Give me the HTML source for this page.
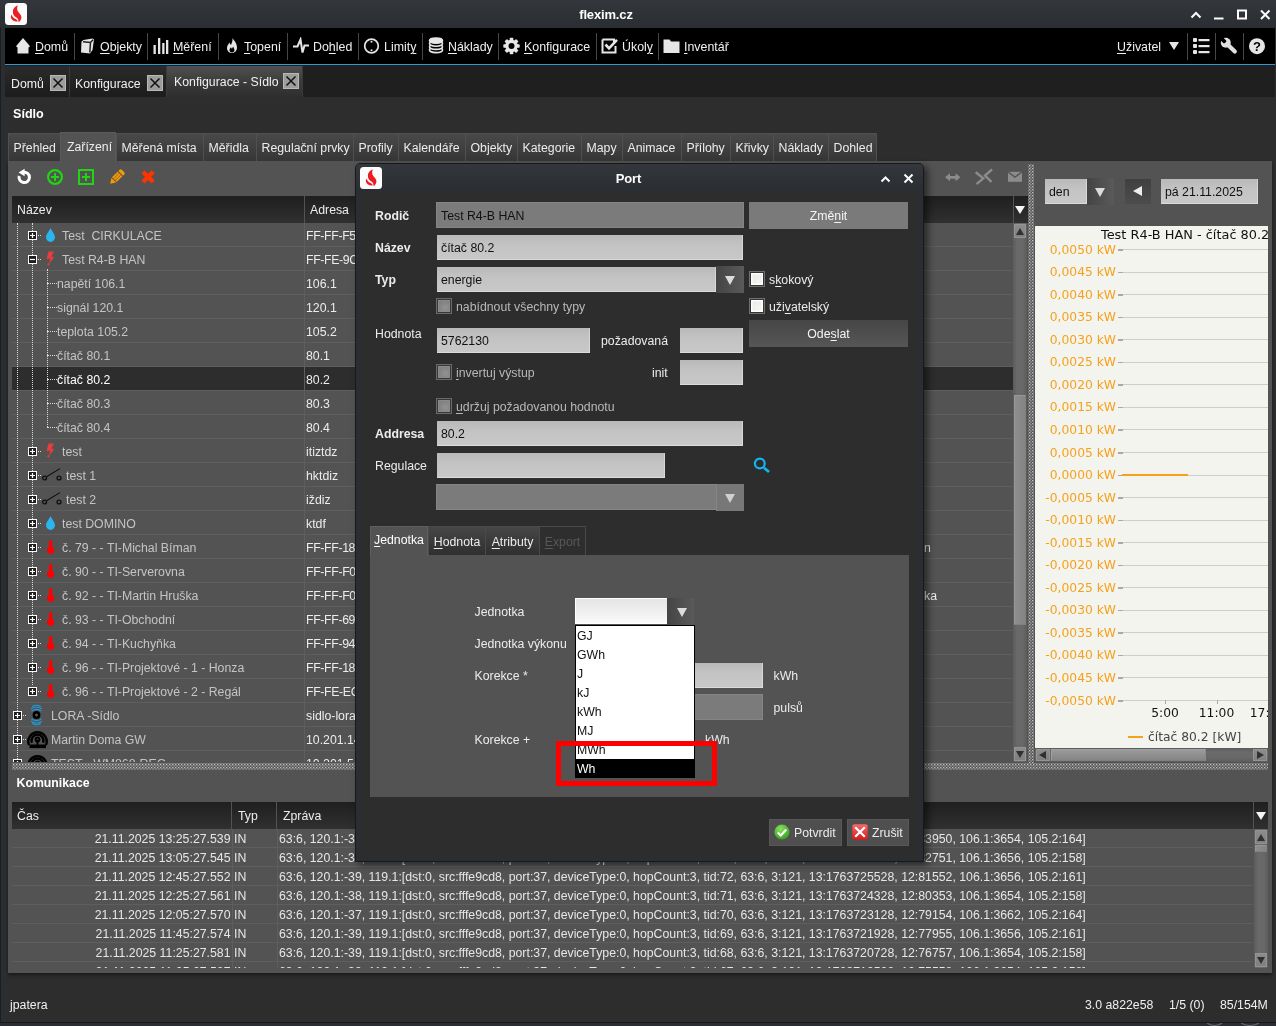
<!DOCTYPE html><html><head><meta charset="utf-8"><title>flexim.cz</title><style>
*{box-sizing:border-box;margin:0;padding:0}
html,body{width:1276px;height:1026px;overflow:hidden;background:#2d2d2d}
body{will-change:transform}
body{position:relative;font-family:"Liberation Sans","DejaVu Sans",sans-serif;font-size:12.3px;color:#e6e6e6;line-height:16px}
.a{position:absolute;white-space:nowrap}
.b{font-weight:bold}
u{text-decoration:underline;text-underline-offset:1.5px;text-decoration-thickness:1px}
.titlebar{left:0;top:0;width:1276px;height:28px;background:linear-gradient(#33373c,#2a2e32)}
.lborder{left:0;top:28px;width:5px;height:998px;background:#2a2e32;border-left:1px solid #1b1d20}
.menubar{left:5px;top:28px;width:1270px;height:36px;background:#000}
.blueline{left:5px;top:64px;width:1270px;height:1px;background:#3498d4;box-shadow:0 1px 0 #332e2c}
.msep{top:33px;width:1px;height:27px;background:#474747}
.mt{top:38px;height:18px;line-height:18px;font-size:12.4px;color:#f0f0f0}
.tabbar{left:5px;top:65px;width:1270px;height:32px;background:#1f1f1f}
.tab{top:66px;height:31px;background:linear-gradient(#2b2b2b,#1c1c1c);border-right:1px solid #3a3a3a}
.tabsel{background:linear-gradient(#505050,#3a3a3a 55%,#2e2e2e);border-right:1px solid #3a3a3a}
.tabx{width:16px;height:16px;background:#9a9a9a;border:1px solid #b0b0b0}
.panel{background:#535353}
.stab{top:133px;height:28px;line-height:29px;background:linear-gradient(#494949,#363636);border:1px solid #505050;border-bottom:none;color:#ececec;text-align:center}
.stabsel{background:#535353;border-color:#5a5a5a;top:132px;height:30px;line-height:28px}
.thead{background:linear-gradient(#1f1f1f,#303030);height:27px;line-height:28px;color:#ececec;border-right:1px solid #535353}
.row{left:12px;width:1001px;height:24px;border-bottom:1px solid #5e5e5e;line-height:23px;color:#d0d0d0}
.rowsel{background:#2d2d2d;color:#fff}
.cdiv{left:304px;width:1px;background:#5e5e5e}
.fld{background:linear-gradient(#b9b9b9,#c3c3c3 40%,#c8c8c8);background-clip:padding-box;border:1px solid transparent;box-shadow:inset -1px -1px 0 rgba(255,255,255,.35);color:#111;line-height:26px;padding-left:4px;height:27px}
.fldd{background:#7b7b7b;border:1px solid #858585;color:#111;line-height:26px;padding-left:4px;height:26px}
.btn{background:#7a7a7a;color:#f4f4f4;text-align:center;height:27px;line-height:28px}
.btn2{background:linear-gradient(#464646,#565656)}
.cbtn{background:linear-gradient(90deg,#444,#5a5a5a);height:27px;width:28px}
.tri{width:0;height:0;border-left:5.5px solid transparent;border-right:5.5px solid transparent;border-top:9px solid #dcdcdc}
.chk{width:16px;height:16px;background:radial-gradient(circle at 65% 65%,#f4f4f0,#e4e4e0);border:1px solid #707070;box-shadow:inset 0 0 0 1px #353535,inset 0 0 0 2.5px #fff}
.chkd{width:16px;height:16px;background:radial-gradient(circle at 60% 60%,#929292,#747474);border:1px solid #6a6a6a;box-shadow:inset 0 0 0 1px #383838,inset 0 0 0 2px #8a8a8a}
.lbl{line-height:16px;height:16px;color:#ececec}
.lbld{color:#b8b8b8}
.dj{font-family:"DejaVu Sans",sans-serif}
</style></head><body>
<div class="a titlebar"></div><div class="a lborder"></div>
<div class="a b" style="left:0;width:1212px;top:6.500px;text-align:center;font-size:13px;letter-spacing:-.15px;color:#fcfcfc">flexim.cz</div>
<svg class="a" style="left:5px;top:3px" width="22" height="22" viewBox="0 0 22 22"><rect width="22" height="22" rx="3.5" fill="#fcfcfc"/><path d="M12.800 2.600C10.500 3.200 8 5.500 7.900 8.500 7.800 11.500 9 13 11 14.200c1.600 1 2.600 2.100 2.400 4-.1.700.4 1 .9.600 1.900-1.600 2.700-4 1.700-6.200-1-2.200-3.400-3.400-3.800-5.800-.2-1.600 0-3 .6-4.200z" fill="#ec1c24"/><path d="M6.400 11.400c-1 2-.6 4.200 1 5.500 1.400 1.100 3.400 1.400 5.200 1.700.2-1-.4-1.800-1.600-2.400-2-1-3.800-2.400-4.600-4.800z" fill="#ec1c24"/></svg>
<svg class="a" style="left:1186px;top:6px" width="88" height="18" viewBox="0 0 88 18" fill="none" stroke="#fcfcfc" stroke-width="2"><path d="M5.500 11.500l4.500-4.500 4.500 4.500"/><path d="M28 12.500h9.500" /><rect x="52" y="4.500" width="8" height="8"/><path d="M75 4.500l8.500 8.500M83.500 4.500l-8.500 8.500"/></svg>
<div class="a menubar"></div><div class="a blueline"></div>
<svg class="a" style="left:16px;top:37px" width="18" height="18" viewBox="0 0 18 18"><path d="M7 1L0 9.200 1.500 10.500V16.500H12.500V10.500L14 9.200z" fill="#e6e6e6"/></svg>
<div class="a mt" style="left:35px"><u>D</u>omů</div>
<svg class="a" style="left:79px;top:37px" width="18" height="18" viewBox="0 0 18 18"><path d="M4.500 3L13.500 1.500 15 2.500 13.500 13 11 16.500 2 15.500 2.500 4.500z" fill="#e6e6e6"/><path d="M4 4.800L11.500 5.500 14 2.800M11.500 5.500L10.800 15.500" stroke="#222" stroke-width="1.500" fill="none"/></svg>
<div class="a mt" style="left:100px"><u>O</u>bjekty</div>
<svg class="a" style="left:153px;top:37px" width="18" height="18" viewBox="0 0 18 18"><path d="M0.500 8h2.300v9H.5zM5 1h2.300v16H5zM9.200 6h2.300v11H9.200zM13 3h2.300v14H13z" fill="#e6e6e6"/></svg>
<div class="a mt" style="left:173px"><u>M</u>ěření</div>
<svg class="a" style="left:224px;top:37px" width="18" height="18" viewBox="0 0 18 18"><path d="M8.500 1c1.500 2.500 4.500 5 4.500 9.500 0 3-2 5.500-5 5.500s-5-2.200-5-5c0-2.500 1.500-4 2.500-5.500.3 1.200.8 2 1.500 2.500C7.500 6 9 4 8.500 1z" fill="#e6e6e6"/><path d="M8 15.500c-1.500 0-2.500-1-2.500-2.500 0-1.200.8-2 1.500-2.800.2.800.6 1.200 1 1.500.2-1 .8-1.800 1.500-2.300-.2 1.300 1 2.300 1 3.600 0 1.500-1 2.500-2.500 2.500z" fill="#000"/></svg>
<div class="a mt" style="left:244px"><u>T</u>opení</div>
<svg class="a" style="left:293px;top:37px" width="18" height="18" viewBox="0 0 18 18"><path d="M0 9.500h4.500L7.500 2.500 9.500 15.500 11.500 8.500H16" stroke="#e6e6e6" stroke-width="2" fill="none" stroke-linejoin="miter"/></svg>
<div class="a mt" style="left:313px">Do<u>h</u>led</div>
<svg class="a" style="left:363px;top:37px" width="18" height="18" viewBox="0 0 18 18"><circle cx="8.500" cy="9" r="6.800" stroke="#e6e6e6" stroke-width="1.700" fill="none"/><circle cx="8.500" cy="4.800" r="1" fill="#e6e6e6"/><circle cx="8.500" cy="13.200" r="1" fill="#e6e6e6"/></svg>
<div class="a mt" style="left:384px">Limit<u>y</u></div>
<svg class="a" style="left:428px;top:37px" width="18" height="18" viewBox="0 0 18 18"><g fill="#000" stroke="#e6e6e6" stroke-width="1.600"><ellipse cx="8" cy="13" rx="6.500" ry="2.600"/><ellipse cx="8" cy="9.800" rx="6.500" ry="2.600"/><ellipse cx="8" cy="6.600" rx="6.500" ry="2.600"/><ellipse cx="8" cy="3.600" rx="6.500" ry="2.600" fill="#e6e6e6"/></g></svg>
<div class="a mt" style="left:448px"><u>N</u>áklady</div>
<svg class="a" style="left:503px;top:37px" width="18" height="18" viewBox="0 0 18 18"><g transform="translate(8.500 9)"><g fill="#e6e6e6"><rect x="-1.800" y="-8.200" width="3.600" height="16.400" rx=".8"/><rect x="-1.800" y="-8.200" width="3.600" height="16.400" rx=".8" transform="rotate(45)"/><rect x="-1.800" y="-8.200" width="3.600" height="16.400" rx=".8" transform="rotate(90)"/><rect x="-1.800" y="-8.200" width="3.600" height="16.400" rx=".8" transform="rotate(135)"/><circle r="6.200"/></g><circle r="3" fill="#000"/></g></svg>
<div class="a mt" style="left:524px"><u>K</u>onfigurace</div>
<svg class="a" style="left:601px;top:37px" width="18" height="18" viewBox="0 0 18 18"><path d="M1.500 2.500h11.500v4M14.500 9v6.500h-13V2.500" stroke="#e6e6e6" stroke-width="2" fill="none"/><path d="M4.500 7.500l3.500 3.800 8-8.500" stroke="#e6e6e6" stroke-width="2.600" fill="none"/></svg>
<div class="a mt" style="left:622px">Úkol<u>y</u></div>
<svg class="a" style="left:663px;top:37px" width="18" height="18" viewBox="0 0 18 18"><path d="M0.500 2.500h6l1.500 2h8.500v11.500h-16z" fill="#e6e6e6"/></svg>
<div class="a mt" style="left:684px"><u>I</u>nventář</div>
<div class="a msep" style="left:74px"></div>
<div class="a msep" style="left:147px"></div>
<div class="a msep" style="left:218px"></div>
<div class="a msep" style="left:287px"></div>
<div class="a msep" style="left:358px"></div>
<div class="a msep" style="left:422px"></div>
<div class="a msep" style="left:498px"></div>
<div class="a msep" style="left:596px"></div>
<div class="a msep" style="left:658px"></div>
<div class="a msep" style="left:1187px"></div>
<div class="a msep" style="left:1215px"></div>
<div class="a msep" style="left:1243px"></div>
<div class="a mt" style="left:1117px"><u>U</u>živatel</div>
<div class="a tri" style="left:1169px;top:42px;border-top-width:8px;border-top-color:#e6e6e6"></div>
<svg class="a" style="left:1193px;top:37px" width="18" height="18" viewBox="0 0 18 18" fill="#e6e6e6"><rect x="0" y="1" width="4" height="4" rx="1"/><rect x="0" y="7" width="4" height="4" rx="1"/><rect x="0" y="13" width="4" height="4" rx="1"/><rect x="5.500" y="2" width="11" height="2.200"/><rect x="5.500" y="8" width="11" height="2.200"/><rect x="5.500" y="14" width="11" height="2.200"/></svg>
<svg class="a" style="left:1220px;top:37px" width="18" height="18" viewBox="0 0 18 18"><path d="M7 7L14.800 14.600" stroke="#e0e0e0" stroke-width="4.200" stroke-linecap="round"/><circle cx="5.800" cy="5.800" r="5" fill="#e0e0e0"/><g transform="rotate(-45 5.800 5.800)"><rect x="3.900" y="-1" width="3.800" height="6.300" rx="1.200" fill="#000"/></g></svg>
<svg class="a" style="left:1248px;top:37px" width="18" height="18" viewBox="0 0 18 18"><circle cx="9" cy="9.200" r="8" fill="#e6e6e6"/><text x="9" y="13.500" text-anchor="middle" font-family="Liberation Sans" font-weight="bold" font-size="13" fill="#000">?</text></svg>
<div class="a tabbar"></div>
<div class="a tab" style="left:5px;width:65px"></div>
<div class="a" style="left:11px;top:76px;color:#f0f0f0">Domů</div>
<svg class="a" style="left:50px;top:75px" width="16" height="16" viewBox="0 0 16 16"><rect x=".5" y=".5" width="15" height="15" fill="#9c9c9c" stroke="#b8b8b8"/><path d="M3.500 3.500l9 9M12.500 3.500l-9 9" stroke="#111" stroke-width="1.500"/></svg>
<div class="a tab" style="left:70px;width:97px"></div>
<div class="a" style="left:75px;top:76px;color:#f0f0f0">Konfigurace</div>
<svg class="a" style="left:147px;top:75px" width="16" height="16" viewBox="0 0 16 16"><rect x=".5" y=".5" width="15" height="15" fill="#9c9c9c" stroke="#b8b8b8"/><path d="M3.500 3.500l9 9M12.500 3.500l-9 9" stroke="#111" stroke-width="1.500"/></svg>
<div class="a tab tabsel" style="left:167px;width:136px"></div>
<div class="a" style="left:174px;top:74px;color:#f0f0f0">Konfigurace - Sídlo</div>
<svg class="a" style="left:283px;top:73px" width="16" height="16" viewBox="0 0 16 16"><rect x=".5" y=".5" width="15" height="15" fill="#9c9c9c" stroke="#b8b8b8"/><path d="M3.500 3.500l9 9M12.500 3.500l-9 9" stroke="#111" stroke-width="1.500"/></svg>
<div class="a b" style="left:13px;top:106px;font-size:12.6px;color:#fff">Sídlo</div>
<div class="a panel" style="left:8px;top:161px;width:1264px;height:812px;box-shadow:0 2px 3px rgba(0,0,0,.45)"></div>
<div class="a stab" style="left:8px;width:53px;text-align:left;padding-left:4.5px">Přehled</div>
<div class="a stab stabsel" style="left:60px;width:56px;text-align:left;padding-left:6px">Zařízení</div>
<div class="a stab" style="left:116px;width:88px;text-align:left;padding-left:4.5px">Měřená místa</div>
<div class="a stab" style="left:203px;width:54px;text-align:left;padding-left:4.5px">Měřidla</div>
<div class="a stab" style="left:256px;width:98px;text-align:left;padding-left:4.5px">Regulační prvky</div>
<div class="a stab" style="left:353px;width:46px;text-align:left;padding-left:4.5px">Profily</div>
<div class="a stab" style="left:398px;width:68px;text-align:left;padding-left:4.5px">Kalendáře</div>
<div class="a stab" style="left:465px;width:53px;text-align:left;padding-left:4.5px">Objekty</div>
<div class="a stab" style="left:517px;width:65px;text-align:left;padding-left:4.5px">Kategorie</div>
<div class="a stab" style="left:581px;width:42px;text-align:left;padding-left:4.5px">Mapy</div>
<div class="a stab" style="left:622px;width:60px;text-align:left;padding-left:4.5px">Animace</div>
<div class="a stab" style="left:681px;width:50px;text-align:left;padding-left:4.5px">Přílohy</div>
<div class="a stab" style="left:730px;width:44px;text-align:left;padding-left:4.5px">Křivky</div>
<div class="a stab" style="left:773px;width:56px;text-align:left;padding-left:4.5px">Náklady</div>
<div class="a stab" style="left:828px;width:49px;text-align:left;padding-left:4.5px">Dohled</div>
<svg class="a" style="left:16px;top:168px" width="18" height="18" viewBox="0 0 18 18"><path d="M7.600 4.200A5.200 5.200 0 1 1 3.200 8" stroke="#fff" stroke-width="3" fill="none"/><path d="M8.600 0.800v7.500l-6-3.800z" fill="#fff"/></svg>
<svg class="a" style="left:46px;top:168px" width="18" height="18" viewBox="0 0 18 18" fill="none" stroke="#20d414" stroke-width="2.200"><circle cx="9" cy="9" r="6.900"/><path d="M9 5v8M5 9h8" stroke-width="2"/></svg>
<svg class="a" style="left:77px;top:168px" width="18" height="18" viewBox="0 0 18 18" fill="none" stroke="#20d414" stroke-width="2"><rect x="2" y="2" width="14" height="14"/><path d="M9 5v8M5 9h8" stroke-width="2"/></svg>
<svg class="a" style="left:108px;top:168px" width="18" height="18" viewBox="0 0 18 18"><g transform="rotate(45 9 9)" fill="#f59a00"><path d="M5.700 3.800V2a1.500 1.500 0 0 1 1.500-1.500h3.600a1.500 1.500 0 0 1 1.500 1.500v1.800z"/><rect x="5.700" y="4.800" width="1.900" height="8"/><rect x="8.050" y="4.800" width="1.900" height="8"/><rect x="10.400" y="4.800" width="1.900" height="8"/><path d="M5.700 13.600h6.600L9 18.600z"/></g></svg>
<svg class="a" style="left:140px;top:169px" width="16" height="16" viewBox="0 0 16 16"><path d="M3 2.800l10.200 10.200M13.200 2.800l-10.200 10.200" stroke="#ff3300" stroke-width="4.400"/></svg>
<svg class="a" style="left:944px;top:168px" width="80" height="18" viewBox="0 0 80 18"><g fill="#8c8c8c"><path d="M1 9.300l5-4v2.600h5.500V5.300l5 4-5 4v-2.600H6v2.600z"/><path d="M64 3.800h14v10H64z"/></g><path d="M64 4l7 5 7-5" stroke="#555" stroke-width="1.500" fill="none"/><path d="M31.700 4.300L39.300 10.400 32.500 16.200M48 1.500L41 7.500 47.500 13.800" stroke="#8c8c8c" stroke-width="2.400" fill="none" stroke-linejoin="miter"/></svg>
<div class="a thead" style="left:12px;top:196px;width:293px;padding-left:5px">Název</div>
<div class="a thead" style="left:305px;top:196px;width:708px;padding-left:5px;border-right:none">Adresa</div>
<div class="a" style="left:1013px;top:196px;width:15px;height:27px;background:linear-gradient(#1f1f1f,#303030);border-left:1px solid #535353"></div>
<div class="a tri" style="left:1015px;top:206px;border-left-width:5px;border-right-width:5px;border-top-width:8px;border-top-color:#f4f4f4"></div>
<div class="a" style="left:0;top:223px;width:1028px;height:539px;overflow:hidden">
<div class="a row" style="top:0px"></div>
<div class="a row" style="top:24px"></div>
<div class="a row" style="top:48px"></div>
<div class="a row" style="top:72px"></div>
<div class="a row" style="top:96px"></div>
<div class="a row" style="top:120px"></div>
<div class="a row rowsel" style="top:144px"></div>
<div class="a row" style="top:168px"></div>
<div class="a row" style="top:192px"></div>
<div class="a row" style="top:216px"></div>
<div class="a row" style="top:240px"></div>
<div class="a row" style="top:264px"></div>
<div class="a row" style="top:288px"></div>
<div class="a row" style="top:312px"></div>
<div class="a row" style="top:336px"></div>
<div class="a row" style="top:360px"></div>
<div class="a row" style="top:384px"></div>
<div class="a row" style="top:408px"></div>
<div class="a row" style="top:432px"></div>
<div class="a row" style="top:456px"></div>
<div class="a row" style="top:480px"></div>
<div class="a row" style="top:504px"></div>
<div class="a row" style="top:528px"></div>
<div class="a" style="left:17px;top:0;width:0;height:538px;border-left:1px dotted #dadada"></div>
<div class="a" style="left:32px;top:0;width:0;height:462px;border-left:1px dotted #dadada"></div>
<div class="a" style="left:47px;top:46px;width:0;height:158px;border-left:1px dotted #dadada"></div>
<div class="a" style="left:47px;top:60px;width:10px;height:0;border-top:1px dotted #dadada"></div>
<div class="a" style="left:47px;top:84px;width:10px;height:0;border-top:1px dotted #dadada"></div>
<div class="a" style="left:47px;top:108px;width:10px;height:0;border-top:1px dotted #dadada"></div>
<div class="a" style="left:47px;top:132px;width:10px;height:0;border-top:1px dotted #dadada"></div>
<div class="a" style="left:47px;top:156px;width:10px;height:0;border-top:1px dotted #dadada"></div>
<div class="a" style="left:47px;top:180px;width:10px;height:0;border-top:1px dotted #dadada"></div>
<div class="a" style="left:47px;top:204px;width:10px;height:0;border-top:1px dotted #dadada"></div>
<div class="a" style="left:38px;top:12px;width:3px;height:0;border-top:1px dotted #dadada"></div>
<div class="a" style="left:38px;top:36px;width:3px;height:0;border-top:1px dotted #dadada"></div>
<div class="a" style="left:38px;top:228px;width:3px;height:0;border-top:1px dotted #dadada"></div>
<div class="a" style="left:38px;top:252px;width:3px;height:0;border-top:1px dotted #dadada"></div>
<div class="a" style="left:38px;top:276px;width:3px;height:0;border-top:1px dotted #dadada"></div>
<div class="a" style="left:38px;top:300px;width:3px;height:0;border-top:1px dotted #dadada"></div>
<div class="a" style="left:38px;top:324px;width:3px;height:0;border-top:1px dotted #dadada"></div>
<div class="a" style="left:38px;top:348px;width:3px;height:0;border-top:1px dotted #dadada"></div>
<div class="a" style="left:38px;top:372px;width:3px;height:0;border-top:1px dotted #dadada"></div>
<div class="a" style="left:38px;top:396px;width:3px;height:0;border-top:1px dotted #dadada"></div>
<div class="a" style="left:38px;top:420px;width:3px;height:0;border-top:1px dotted #dadada"></div>
<div class="a" style="left:38px;top:444px;width:3px;height:0;border-top:1px dotted #dadada"></div>
<div class="a" style="left:38px;top:468px;width:3px;height:0;border-top:1px dotted #dadada"></div>
<div class="a" style="left:23px;top:492px;width:3px;height:0;border-top:1px dotted #dadada"></div>
<div class="a" style="left:23px;top:516px;width:3px;height:0;border-top:1px dotted #dadada"></div>
<div class="a" style="left:23px;top:540px;width:3px;height:0;border-top:1px dotted #dadada"></div>
<svg class="a" style="left:28px;top:8px" width="9" height="9" viewBox="0 0 9 9"><rect x=".5" y=".5" width="8" height="8" fill="#1e1e1e" stroke="#fafafa"/><path d="M2 4.500h5M4.500 2v5" stroke="#fff" stroke-width="1.200"/></svg>
<svg class="a" style="left:42px;top:3px" width="16" height="18" viewBox="0 0 16 18"><path d="M8.500 2.200C7 5 4 8.200 4 11.300a4.500 4.600 0 0 0 9 0C13 8.200 10 5 8.500 2.200z" fill="#2ab4f0"/></svg>
<div class="a" style="left:62px;top:5px;color:#c4c4c4;white-space:pre">Test  CIRKULACE</div>
<div class="a" style="left:306px;top:5px;color:#ececec;letter-spacing:-.35px">FF-FF-F5-</div>
<svg class="a" style="left:28px;top:32px" width="9" height="9" viewBox="0 0 9 9"><rect x=".5" y=".5" width="8" height="8" fill="#1e1e1e" stroke="#fafafa"/><path d="M2 4.500h5" stroke="#fff" stroke-width="1.200"/></svg>
<svg class="a" style="left:42px;top:27px" width="16" height="18" viewBox="0 0 16 18"><path d="M6.500 1.500h5.500L9.200 6.800h3L7.200 14l.5 1.500-2.700-.8 1.700-2.200.5 1L8.200 8.800H4.500z" fill="#ea3c3c"/></svg>
<div class="a" style="left:62px;top:29px;color:#c4c4c4;white-space:pre">Test R4-B HAN</div>
<div class="a" style="left:306px;top:29px;color:#ececec;letter-spacing:-.35px">FF-FE-9C-</div>
<div class="a" style="left:57px;top:53px;color:#c4c4c4;white-space:pre">napětí 106.1</div>
<div class="a" style="left:306px;top:53px;color:#ececec">106.1</div>
<div class="a" style="left:57px;top:77px;color:#c4c4c4;white-space:pre">signál 120.1</div>
<div class="a" style="left:306px;top:77px;color:#ececec">120.1</div>
<div class="a" style="left:57px;top:101px;color:#c4c4c4;white-space:pre">teplota 105.2</div>
<div class="a" style="left:306px;top:101px;color:#ececec">105.2</div>
<div class="a" style="left:57px;top:125px;color:#c4c4c4;white-space:pre">čítač 80.1</div>
<div class="a" style="left:306px;top:125px;color:#ececec">80.1</div>
<div class="a" style="left:57px;top:149px;color:#fff;white-space:pre">čítač 80.2</div>
<div class="a" style="left:306px;top:149px;color:#ececec">80.2</div>
<div class="a" style="left:57px;top:173px;color:#c4c4c4;white-space:pre">čítač 80.3</div>
<div class="a" style="left:306px;top:173px;color:#ececec">80.3</div>
<div class="a" style="left:57px;top:197px;color:#c4c4c4;white-space:pre">čítač 80.4</div>
<div class="a" style="left:306px;top:197px;color:#ececec">80.4</div>
<svg class="a" style="left:28px;top:224px" width="9" height="9" viewBox="0 0 9 9"><rect x=".5" y=".5" width="8" height="8" fill="#1e1e1e" stroke="#fafafa"/><path d="M2 4.500h5M4.500 2v5" stroke="#fff" stroke-width="1.200"/></svg>
<svg class="a" style="left:42px;top:219px" width="16" height="18" viewBox="0 0 16 18"><path d="M6.500 1.500h5.500L9.200 6.800h3L7.200 14l.5 1.500-2.700-.8 1.700-2.200.5 1L8.200 8.800H4.500z" fill="#ea3c3c"/></svg>
<div class="a" style="left:62px;top:221px;color:#c4c4c4;white-space:pre">test</div>
<div class="a" style="left:306px;top:221px;color:#ececec">itiztdz</div>
<svg class="a" style="left:28px;top:248px" width="9" height="9" viewBox="0 0 9 9"><rect x=".5" y=".5" width="8" height="8" fill="#1e1e1e" stroke="#fafafa"/><path d="M2 4.500h5M4.500 2v5" stroke="#fff" stroke-width="1.200"/></svg>
<svg class="a" style="left:41px;top:243px" width="22" height="18" viewBox="0 0 22 18"><g stroke="#101010" stroke-width="1.400" fill="none"><circle cx="3.600" cy="12" r="1.900"/><circle cx="18" cy="12" r="1.900"/><path d="M5.500 10.800L19 2.600" stroke-width="1.100"/></g></svg>
<div class="a" style="left:66px;top:245px;color:#c4c4c4;white-space:pre">test 1</div>
<div class="a" style="left:306px;top:245px;color:#ececec">hktdiz</div>
<svg class="a" style="left:28px;top:272px" width="9" height="9" viewBox="0 0 9 9"><rect x=".5" y=".5" width="8" height="8" fill="#1e1e1e" stroke="#fafafa"/><path d="M2 4.500h5M4.500 2v5" stroke="#fff" stroke-width="1.200"/></svg>
<svg class="a" style="left:41px;top:267px" width="22" height="18" viewBox="0 0 22 18"><g stroke="#101010" stroke-width="1.400" fill="none"><circle cx="3.600" cy="12" r="1.900"/><circle cx="18" cy="12" r="1.900"/><path d="M5.500 10.800L19 2.600" stroke-width="1.100"/></g></svg>
<div class="a" style="left:66px;top:269px;color:#c4c4c4;white-space:pre">test 2</div>
<div class="a" style="left:306px;top:269px;color:#ececec">iždiz</div>
<svg class="a" style="left:28px;top:296px" width="9" height="9" viewBox="0 0 9 9"><rect x=".5" y=".5" width="8" height="8" fill="#1e1e1e" stroke="#fafafa"/><path d="M2 4.500h5M4.500 2v5" stroke="#fff" stroke-width="1.200"/></svg>
<svg class="a" style="left:42px;top:291px" width="16" height="18" viewBox="0 0 16 18"><path d="M8.500 2.200C7 5 4 8.200 4 11.300a4.500 4.600 0 0 0 9 0C13 8.200 10 5 8.500 2.200z" fill="#2ab4f0"/></svg>
<div class="a" style="left:62px;top:293px;color:#c4c4c4;white-space:pre">test DOMINO</div>
<div class="a" style="left:306px;top:293px;color:#ececec">ktdf</div>
<svg class="a" style="left:28px;top:320px" width="9" height="9" viewBox="0 0 9 9"><rect x=".5" y=".5" width="8" height="8" fill="#1e1e1e" stroke="#fafafa"/><path d="M2 4.500h5M4.500 2v5" stroke="#fff" stroke-width="1.200"/></svg>
<svg class="a" style="left:42px;top:315px" width="16" height="18" viewBox="0 0 16 18"><path d="M6.900 3.800a1.700 1.700 0 0 1 3.400 0v5.200a3.700 3.700 0 1 1-3.400 0z" fill="#ff0000"/></svg>
<div class="a" style="left:62px;top:317px;color:#c4c4c4;white-space:pre">č. 79 - - TI-Michal Bíman</div>
<div class="a" style="left:306px;top:317px;color:#ececec;letter-spacing:-.35px">FF-FF-18-</div>
<div class="a" style="left:924px;top:317px;color:#ececec">n</div>
<svg class="a" style="left:28px;top:344px" width="9" height="9" viewBox="0 0 9 9"><rect x=".5" y=".5" width="8" height="8" fill="#1e1e1e" stroke="#fafafa"/><path d="M2 4.500h5M4.500 2v5" stroke="#fff" stroke-width="1.200"/></svg>
<svg class="a" style="left:42px;top:339px" width="16" height="18" viewBox="0 0 16 18"><path d="M6.900 3.800a1.700 1.700 0 0 1 3.400 0v5.200a3.700 3.700 0 1 1-3.400 0z" fill="#ff0000"/></svg>
<div class="a" style="left:62px;top:341px;color:#c4c4c4;white-space:pre">č. 90 - - TI-Serverovna</div>
<div class="a" style="left:306px;top:341px;color:#ececec;letter-spacing:-.35px">FF-FF-F0-</div>
<svg class="a" style="left:28px;top:368px" width="9" height="9" viewBox="0 0 9 9"><rect x=".5" y=".5" width="8" height="8" fill="#1e1e1e" stroke="#fafafa"/><path d="M2 4.500h5M4.500 2v5" stroke="#fff" stroke-width="1.200"/></svg>
<svg class="a" style="left:42px;top:363px" width="16" height="18" viewBox="0 0 16 18"><path d="M6.900 3.800a1.700 1.700 0 0 1 3.400 0v5.200a3.700 3.700 0 1 1-3.400 0z" fill="#ff0000"/></svg>
<div class="a" style="left:62px;top:365px;color:#c4c4c4;white-space:pre">č. 92 - - TI-Martin Hruška</div>
<div class="a" style="left:306px;top:365px;color:#ececec;letter-spacing:-.35px">FF-FF-F0-</div>
<div class="a" style="left:924px;top:365px;color:#ececec">ka</div>
<svg class="a" style="left:28px;top:392px" width="9" height="9" viewBox="0 0 9 9"><rect x=".5" y=".5" width="8" height="8" fill="#1e1e1e" stroke="#fafafa"/><path d="M2 4.500h5M4.500 2v5" stroke="#fff" stroke-width="1.200"/></svg>
<svg class="a" style="left:42px;top:387px" width="16" height="18" viewBox="0 0 16 18"><path d="M6.900 3.800a1.700 1.700 0 0 1 3.400 0v5.200a3.700 3.700 0 1 1-3.400 0z" fill="#ff0000"/></svg>
<div class="a" style="left:62px;top:389px;color:#c4c4c4;white-space:pre">č. 93 - - TI-Obchodní</div>
<div class="a" style="left:306px;top:389px;color:#ececec;letter-spacing:-.35px">FF-FF-69-</div>
<svg class="a" style="left:28px;top:416px" width="9" height="9" viewBox="0 0 9 9"><rect x=".5" y=".5" width="8" height="8" fill="#1e1e1e" stroke="#fafafa"/><path d="M2 4.500h5M4.500 2v5" stroke="#fff" stroke-width="1.200"/></svg>
<svg class="a" style="left:42px;top:411px" width="16" height="18" viewBox="0 0 16 18"><path d="M6.900 3.800a1.700 1.700 0 0 1 3.400 0v5.200a3.700 3.700 0 1 1-3.400 0z" fill="#ff0000"/></svg>
<div class="a" style="left:62px;top:413px;color:#c4c4c4;white-space:pre">č. 94 - - TI-Kuchyňka</div>
<div class="a" style="left:306px;top:413px;color:#ececec;letter-spacing:-.35px">FF-FF-94-</div>
<svg class="a" style="left:28px;top:440px" width="9" height="9" viewBox="0 0 9 9"><rect x=".5" y=".5" width="8" height="8" fill="#1e1e1e" stroke="#fafafa"/><path d="M2 4.500h5M4.500 2v5" stroke="#fff" stroke-width="1.200"/></svg>
<svg class="a" style="left:42px;top:435px" width="16" height="18" viewBox="0 0 16 18"><path d="M6.900 3.800a1.700 1.700 0 0 1 3.400 0v5.200a3.700 3.700 0 1 1-3.400 0z" fill="#ff0000"/></svg>
<div class="a" style="left:62px;top:437px;color:#c4c4c4;white-space:pre">č. 96 - - TI-Projektové - 1 - Honza</div>
<div class="a" style="left:306px;top:437px;color:#ececec;letter-spacing:-.35px">FF-FF-18-</div>
<svg class="a" style="left:28px;top:464px" width="9" height="9" viewBox="0 0 9 9"><rect x=".5" y=".5" width="8" height="8" fill="#1e1e1e" stroke="#fafafa"/><path d="M2 4.500h5M4.500 2v5" stroke="#fff" stroke-width="1.200"/></svg>
<svg class="a" style="left:42px;top:459px" width="16" height="18" viewBox="0 0 16 18"><path d="M6.900 3.800a1.700 1.700 0 0 1 3.400 0v5.200a3.700 3.700 0 1 1-3.400 0z" fill="#ff0000"/></svg>
<div class="a" style="left:62px;top:461px;color:#c4c4c4;white-space:pre">č. 96 - - TI-Projektové - 2 - Regál</div>
<div class="a" style="left:306px;top:461px;color:#ececec;letter-spacing:-.35px">FF-FE-EC-</div>
<svg class="a" style="left:13px;top:488px" width="9" height="9" viewBox="0 0 9 9"><rect x=".5" y=".5" width="8" height="8" fill="#1e1e1e" stroke="#fafafa"/><path d="M2 4.500h5M4.500 2v5" stroke="#fff" stroke-width="1.200"/></svg>
<svg class="a" style="left:27px;top:480px" width="18" height="24" viewBox="0 0 18 24"><g fill="none" stroke="#1e9ad8" stroke-width="1.300"><path d="M4.500 8Q9.500 4.800 14.500 8M4 5.800Q9.500 2.300 15 5.800M5.200 3.400Q9.500 1 13.800 3.400M4.500 16Q9.500 19.200 14.500 16M4 18.200Q9.500 21.700 15 18.200M5.200 20.600Q9.500 23 13.800 20.600" stroke-width="1.100"/></g><circle cx="9.500" cy="12" r="2.700" fill="none" stroke="#000" stroke-width="2.400"/></svg>
<div class="a" style="left:51px;top:485px;color:#c4c4c4;white-space:pre">LORA -Sídlo</div>
<div class="a" style="left:306px;top:485px;color:#ececec">sidlo-lora</div>
<svg class="a" style="left:13px;top:512px" width="9" height="9" viewBox="0 0 9 9"><rect x=".5" y=".5" width="8" height="8" fill="#1e1e1e" stroke="#fafafa"/><path d="M2 4.500h5M4.500 2v5" stroke="#fff" stroke-width="1.200"/></svg>
<svg class="a" style="left:26px;top:505px" width="22" height="22" viewBox="0 0 22 22"><g fill="none" stroke="#000" stroke-width="2.400"><path d="M5.900 14.800A6 6 0 1 1 17.100 14.800"/><path d="M3 17A9.200 9.200 0 1 1 20 17"/><circle cx="11.500" cy="11.500" r="2" stroke-width="1.800"/></g><rect x="3.500" y="16.500" width="16.500" height="3.600" fill="#000"/><rect x="10.500" y="11.500" width="2" height="6" fill="#000"/></svg>
<div class="a" style="left:51px;top:509px;color:#c4c4c4;white-space:pre">Martin Doma GW</div>
<div class="a" style="left:306px;top:509px;color:#ececec">10.201.14</div>
<svg class="a" style="left:13px;top:536px" width="9" height="9" viewBox="0 0 9 9"><rect x=".5" y=".5" width="8" height="8" fill="#1e1e1e" stroke="#fafafa"/><path d="M2 4.500h5M4.500 2v5" stroke="#fff" stroke-width="1.200"/></svg>
<svg class="a" style="left:26px;top:529px" width="22" height="22" viewBox="0 0 22 22"><g fill="none" stroke="#000" stroke-width="2.400"><path d="M5.900 14.800A6 6 0 1 1 17.100 14.800"/><path d="M3 17A9.200 9.200 0 1 1 20 17"/><circle cx="11.500" cy="11.500" r="2" stroke-width="1.800"/></g><rect x="3.500" y="16.500" width="16.500" height="3.600" fill="#000"/><rect x="10.500" y="11.500" width="2" height="6" fill="#000"/></svg>
<div class="a" style="left:51px;top:533px;color:#c4c4c4;white-space:pre">TEST - WM868-REG</div>
<div class="a" style="left:306px;top:533px;color:#ececec">10.201.5</div>
<div class="a cdiv" style="top:0;height:540px"></div>
<div class="a" style="left:1013px;top:0;width:14px;height:539px;background:linear-gradient(90deg,#5c5c5c,#6a6a6a 30%,#686868 70%,#5c5c5c)"></div>
<div class="a" style="left:1014px;top:172px;width:12px;height:230px;background:linear-gradient(90deg,#8e8e8e,#848484);border:1px solid #969696;border-right-color:#808080;border-bottom-color:#808080"></div>
<div class="a" style="left:1014px;top:1px;width:12px;height:14px;background:linear-gradient(#8c8c8c,#808080);border:1px solid #949494"></div>
<div class="a" style="left:1016px;top:4.5px;width:0;height:0;border-left:4px solid transparent;border-right:4px solid transparent;border-bottom:7.500px solid #303030"></div>
<div class="a" style="left:1014px;top:524px;width:12px;height:14px;background:linear-gradient(#8c8c8c,#808080);border:1px solid #949494"></div>
<div class="a" style="left:1016px;top:527.5px;width:0;height:0;border-left:4px solid transparent;border-right:4px solid transparent;border-top:7.500px solid #303030"></div>
</div>
<svg class="a" style="left:1028px;top:164px;width:6px;height:599px" width="6" height="599"><defs><pattern id="bump" x="0" y="0" width="3" height="3" patternUnits="userSpaceOnUse"><rect width="3" height="3" fill="#7a7a7a"/><rect x="1" y="0" width="1" height="1" fill="#545454"/><rect x="0" y="1" width="1" height="1" fill="#545454"/><rect x="1" y="1" width="1" height="1" fill="#bcbcbc"/></pattern></defs><rect width="6" height="601" fill="url(#bump)"/></svg>
<svg class="a" style="left:12px;top:763px;width:1256px;height:6.500px" width="1256" height="6.500"><rect width="1256" height="7" fill="#7a7a7a"/><rect y="1" width="1256" height="6" fill="url(#bump)"/></svg>
<div class="a fld" style="left:1044px;top:178px;width:44px">den</div>
<div class="a cbtn" style="left:1087px;top:178px;width:27px;height:27px"></div><div class="a tri" style="left:1095px;top:188px"></div>
<div class="a cbtn" style="left:1125px;top:179px;width:26px;height:25px;background:linear-gradient(#404040,#4c4c4c)"></div><div class="a" style="left:1133px;top:186px;width:0;height:0;border-top:5.500px solid transparent;border-bottom:5.500px solid transparent;border-right:9px solid #eee"></div>
<div class="a fld" style="left:1160px;top:178px;width:99px">pá 21.11.2025</div>
<div class="a dj" style="left:1035px;top:226px;width:233px;height:522px;background:#f4f4ef;overflow:hidden">
<div class="a" style="left:66px;top:1px;font-size:12.9px;color:#111">Test R4-B HAN - čítač 80.2</div>
<div class="a" style="right:152px;top:15.5px;font-size:12.3px;color:#f5a11c">0,0050 kW</div>
<div class="a" style="left:83px;top:23.0px;width:5px;height:1.500px;background:#a8a8a8"></div><div class="a" style="left:88px;top:23.0px;width:150px;height:1px;background:#cdcdcd"></div>
<div class="a" style="right:152px;top:38.0px;font-size:12.3px;color:#f5a11c">0,0045 kW</div>
<div class="a" style="left:83px;top:45.5px;width:5px;height:1.500px;background:#a8a8a8"></div><div class="a" style="left:88px;top:45.5px;width:150px;height:1px;background:#cdcdcd"></div>
<div class="a" style="right:152px;top:60.6px;font-size:12.3px;color:#f5a11c">0,0040 kW</div>
<div class="a" style="left:83px;top:68.1px;width:5px;height:1.500px;background:#a8a8a8"></div><div class="a" style="left:88px;top:68.1px;width:150px;height:1px;background:#cdcdcd"></div>
<div class="a" style="right:152px;top:83.2px;font-size:12.3px;color:#f5a11c">0,0035 kW</div>
<div class="a" style="left:83px;top:90.7px;width:5px;height:1.500px;background:#a8a8a8"></div><div class="a" style="left:88px;top:90.7px;width:150px;height:1px;background:#cdcdcd"></div>
<div class="a" style="right:152px;top:105.7px;font-size:12.3px;color:#f5a11c">0,0030 kW</div>
<div class="a" style="left:83px;top:113.2px;width:5px;height:1.500px;background:#a8a8a8"></div><div class="a" style="left:88px;top:113.2px;width:150px;height:1px;background:#cdcdcd"></div>
<div class="a" style="right:152px;top:128.2px;font-size:12.3px;color:#f5a11c">0,0025 kW</div>
<div class="a" style="left:83px;top:135.8px;width:5px;height:1.500px;background:#a8a8a8"></div><div class="a" style="left:88px;top:135.8px;width:150px;height:1px;background:#cdcdcd"></div>
<div class="a" style="right:152px;top:150.8px;font-size:12.3px;color:#f5a11c">0,0020 kW</div>
<div class="a" style="left:83px;top:158.3px;width:5px;height:1.500px;background:#a8a8a8"></div><div class="a" style="left:88px;top:158.3px;width:150px;height:1px;background:#cdcdcd"></div>
<div class="a" style="right:152px;top:173.3px;font-size:12.3px;color:#f5a11c">0,0015 kW</div>
<div class="a" style="left:83px;top:180.8px;width:5px;height:1.500px;background:#a8a8a8"></div><div class="a" style="left:88px;top:180.8px;width:150px;height:1px;background:#cdcdcd"></div>
<div class="a" style="right:152px;top:195.9px;font-size:12.3px;color:#f5a11c">0,0010 kW</div>
<div class="a" style="left:83px;top:203.4px;width:5px;height:1.500px;background:#a8a8a8"></div><div class="a" style="left:88px;top:203.4px;width:150px;height:1px;background:#cdcdcd"></div>
<div class="a" style="right:152px;top:218.5px;font-size:12.3px;color:#f5a11c">0,0005 kW</div>
<div class="a" style="left:83px;top:226.0px;width:5px;height:1.500px;background:#a8a8a8"></div><div class="a" style="left:88px;top:226.0px;width:150px;height:1px;background:#cdcdcd"></div>
<div class="a" style="right:152px;top:241.0px;font-size:12.3px;color:#f5a11c">0,0000 kW</div>
<div class="a" style="left:83px;top:248.5px;width:5px;height:1.500px;background:#a8a8a8"></div><div class="a" style="left:88px;top:248.5px;width:150px;height:1px;background:#cdcdcd"></div>
<div class="a" style="right:152px;top:263.6px;font-size:12.3px;color:#f5a11c">-0,0005 kW</div>
<div class="a" style="left:83px;top:271.1px;width:5px;height:1.500px;background:#a8a8a8"></div><div class="a" style="left:88px;top:271.1px;width:150px;height:1px;background:#cdcdcd"></div>
<div class="a" style="right:152px;top:286.1px;font-size:12.3px;color:#f5a11c">-0,0010 kW</div>
<div class="a" style="left:83px;top:293.6px;width:5px;height:1.500px;background:#a8a8a8"></div><div class="a" style="left:88px;top:293.6px;width:150px;height:1px;background:#cdcdcd"></div>
<div class="a" style="right:152px;top:308.7px;font-size:12.3px;color:#f5a11c">-0,0015 kW</div>
<div class="a" style="left:83px;top:316.2px;width:5px;height:1.500px;background:#a8a8a8"></div><div class="a" style="left:88px;top:316.2px;width:150px;height:1px;background:#cdcdcd"></div>
<div class="a" style="right:152px;top:331.2px;font-size:12.3px;color:#f5a11c">-0,0020 kW</div>
<div class="a" style="left:83px;top:338.7px;width:5px;height:1.500px;background:#a8a8a8"></div><div class="a" style="left:88px;top:338.7px;width:150px;height:1px;background:#cdcdcd"></div>
<div class="a" style="right:152px;top:353.8px;font-size:12.3px;color:#f5a11c">-0,0025 kW</div>
<div class="a" style="left:83px;top:361.2px;width:5px;height:1.500px;background:#a8a8a8"></div><div class="a" style="left:88px;top:361.2px;width:150px;height:1px;background:#cdcdcd"></div>
<div class="a" style="right:152px;top:376.3px;font-size:12.3px;color:#f5a11c">-0,0030 kW</div>
<div class="a" style="left:83px;top:383.8px;width:5px;height:1.500px;background:#a8a8a8"></div><div class="a" style="left:88px;top:383.8px;width:150px;height:1px;background:#cdcdcd"></div>
<div class="a" style="right:152px;top:398.9px;font-size:12.3px;color:#f5a11c">-0,0035 kW</div>
<div class="a" style="left:83px;top:406.4px;width:5px;height:1.500px;background:#a8a8a8"></div><div class="a" style="left:88px;top:406.4px;width:150px;height:1px;background:#cdcdcd"></div>
<div class="a" style="right:152px;top:421.4px;font-size:12.3px;color:#f5a11c">-0,0040 kW</div>
<div class="a" style="left:83px;top:428.9px;width:5px;height:1.500px;background:#a8a8a8"></div><div class="a" style="left:88px;top:428.9px;width:150px;height:1px;background:#cdcdcd"></div>
<div class="a" style="right:152px;top:443.9px;font-size:12.3px;color:#f5a11c">-0,0045 kW</div>
<div class="a" style="left:83px;top:451.4px;width:5px;height:1.500px;background:#a8a8a8"></div><div class="a" style="left:88px;top:451.4px;width:150px;height:1px;background:#cdcdcd"></div>
<div class="a" style="right:152px;top:466.5px;font-size:12.3px;color:#f5a11c">-0,0050 kW</div>
<div class="a" style="left:83px;top:474.0px;width:5px;height:1.500px;background:#a8a8a8"></div><div class="a" style="left:88px;top:474.0px;width:150px;height:1px;background:#cdcdcd"></div>
<div class="a" style="left:87px;top:247.500px;width:66px;height:2px;background:#f5a11c"></div>
<div class="a" style="left:130px;top:474px;width:1px;height:4px;background:#a8a8a8"></div>
<div class="a" style="left:100px;width:60px;text-align:center;top:479px;font-size:12.3px;color:#111">5:00</div>
<div class="a" style="left:181.5px;top:474px;width:1px;height:4px;background:#a8a8a8"></div>
<div class="a" style="left:151.5px;width:60px;text-align:center;top:479px;font-size:12.3px;color:#111">11:00</div>
<div class="a" style="left:232.5px;top:474px;width:1px;height:4px;background:#a8a8a8"></div>
<div class="a" style="left:202.5px;width:60px;text-align:center;top:479px;font-size:12.3px;color:#111">17:00</div>
<div class="a" style="left:93px;top:509.500px;width:15px;height:2px;background:#f5a11c"></div>
<div class="a" style="left:113px;top:503px;font-size:12.3px;color:#444">čítač 80.2 [kW]</div>
</div>
<div class="a" style="left:1035px;top:748px;width:233px;height:14px;background:linear-gradient(#5c5c5c,#6a6a6a 30%,#686868 70%,#5c5c5c)"></div>
<div class="a" style="left:1051px;top:749px;width:155px;height:12px;background:linear-gradient(#9a9a9a,#858585);border:1px solid #a0a0a0;border-right-color:#8a8a8a;border-bottom-color:#808080"></div>
<div class="a" style="left:1036px;top:749px;width:14px;height:12px;background:linear-gradient(#8c8c8c,#808080);border:1px solid #949494"></div><div class="a" style="left:1038.500px;top:751px;width:0;height:0;border-top:4px solid transparent;border-bottom:4px solid transparent;border-right:7.500px solid #303030"></div>
<div class="a" style="left:1253px;top:749px;width:14px;height:12px;background:linear-gradient(#8c8c8c,#808080);border:1px solid #949494"></div><div class="a" style="left:1257px;top:751px;width:0;height:0;border-top:4px solid transparent;border-bottom:4px solid transparent;border-left:7.500px solid #303030"></div>
<div class="a b" style="left:16.500px;top:775px;color:#fff">Komunikace</div>
<div class="a thead" style="left:12px;top:802px;width:220px;padding-left:5px">Čas</div>
<div class="a thead" style="left:232px;top:802px;width:45px;padding-left:6px">Typ</div>
<div class="a thead" style="left:277px;top:802px;width:976px;padding-left:6px;border-right:none">Zpráva</div>
<div class="a" style="left:1253px;top:802px;width:15px;height:27px;background:linear-gradient(#1f1f1f,#303030);border-left:1px solid #535353"></div>
<div class="a tri" style="left:1256px;top:812px;border-left-width:5px;border-right-width:5px;border-top-width:8px;border-top-color:#f4f4f4"></div>
<div class="a" style="left:12px;top:829px;width:1256px;height:139px;overflow:hidden">
<div class="a" style="left:0;top:0px;width:1241px;height:19px;border-bottom:1px solid #5e5e5e"></div>
<div class="a" style="left:0;width:218.500px;text-align:right;top:1.5px">21.11.2025 13:25:27.539</div>
<div class="a" style="left:222px;top:1.5px">IN</div>
<div class="a" style="left:267px;top:1.5px">63:6, 120.1:-39, 119.1:[dst:0, src:fffe9cd8, port:37, deviceType:0, hopCount:3, tid:74, 63:6, 3:121, 13:1763727928, 12:83950, 106.1:3654, 105.2:164]</div>
<div class="a" style="left:0;top:19px;width:1241px;height:19px;border-bottom:1px solid #5e5e5e"></div>
<div class="a" style="left:0;width:218.500px;text-align:right;top:20.5px">21.11.2025 13:05:27.545</div>
<div class="a" style="left:222px;top:20.5px">IN</div>
<div class="a" style="left:267px;top:20.5px">63:6, 120.1:-39, 119.1:[dst:0, src:fffe9cd8, port:37, deviceType:0, hopCount:3, tid:73, 63:6, 3:121, 13:1763726728, 12:82751, 106.1:3656, 105.2:158]</div>
<div class="a" style="left:0;top:38px;width:1241px;height:19px;border-bottom:1px solid #5e5e5e"></div>
<div class="a" style="left:0;width:218.500px;text-align:right;top:39.5px">21.11.2025 12:45:27.552</div>
<div class="a" style="left:222px;top:39.5px">IN</div>
<div class="a" style="left:267px;top:39.5px">63:6, 120.1:-39, 119.1:[dst:0, src:fffe9cd8, port:37, deviceType:0, hopCount:3, tid:72, 63:6, 3:121, 13:1763725528, 12:81552, 106.1:3656, 105.2:161]</div>
<div class="a" style="left:0;top:57px;width:1241px;height:19px;border-bottom:1px solid #5e5e5e"></div>
<div class="a" style="left:0;width:218.500px;text-align:right;top:58.5px">21.11.2025 12:25:27.561</div>
<div class="a" style="left:222px;top:58.5px">IN</div>
<div class="a" style="left:267px;top:58.5px">63:6, 120.1:-38, 119.1:[dst:0, src:fffe9cd8, port:37, deviceType:0, hopCount:3, tid:71, 63:6, 3:121, 13:1763724328, 12:80353, 106.1:3654, 105.2:158]</div>
<div class="a" style="left:0;top:76px;width:1241px;height:19px;border-bottom:1px solid #5e5e5e"></div>
<div class="a" style="left:0;width:218.500px;text-align:right;top:77.5px">21.11.2025 12:05:27.570</div>
<div class="a" style="left:222px;top:77.5px">IN</div>
<div class="a" style="left:267px;top:77.5px">63:6, 120.1:-37, 119.1:[dst:0, src:fffe9cd8, port:37, deviceType:0, hopCount:3, tid:70, 63:6, 3:121, 13:1763723128, 12:79154, 106.1:3662, 105.2:164]</div>
<div class="a" style="left:0;top:95px;width:1241px;height:19px;border-bottom:1px solid #5e5e5e"></div>
<div class="a" style="left:0;width:218.500px;text-align:right;top:96.5px">21.11.2025 11:45:27.574</div>
<div class="a" style="left:222px;top:96.5px">IN</div>
<div class="a" style="left:267px;top:96.5px">63:6, 120.1:-39, 119.1:[dst:0, src:fffe9cd8, port:37, deviceType:0, hopCount:3, tid:69, 63:6, 3:121, 13:1763721928, 12:77955, 106.1:3656, 105.2:161]</div>
<div class="a" style="left:0;top:114px;width:1241px;height:19px;border-bottom:1px solid #5e5e5e"></div>
<div class="a" style="left:0;width:218.500px;text-align:right;top:115.5px">21.11.2025 11:25:27.581</div>
<div class="a" style="left:222px;top:115.5px">IN</div>
<div class="a" style="left:267px;top:115.5px">63:6, 120.1:-39, 119.1:[dst:0, src:fffe9cd8, port:37, deviceType:0, hopCount:3, tid:68, 63:6, 3:121, 13:1763720728, 12:76757, 106.1:3654, 105.2:158]</div>
<div class="a" style="left:0;top:133px;width:1241px;height:19px;border-bottom:1px solid #5e5e5e"></div>
<div class="a" style="left:0;width:218.500px;text-align:right;top:134.5px">21.11.2025 11:05:27.587</div>
<div class="a" style="left:222px;top:134.5px">IN</div>
<div class="a" style="left:267px;top:134.5px">63:6, 120.1:-39, 119.1:[dst:0, src:fffe9cd8, port:37, deviceType:0, hopCount:3, tid:67, 63:6, 3:121, 13:1763719528, 12:75558, 106.1:3654, 105.2:158]</div>
<div class="a" style="left:220px;top:0;width:1px;height:140px;background:#5e5e5e"></div><div class="a" style="left:264.500px;top:0;width:1px;height:140px;background:#5e5e5e"></div>
<div class="a" style="left:1242px;top:0;width:14px;height:139px;background:linear-gradient(90deg,#5c5c5c,#6a6a6a 30%,#686868 70%,#5c5c5c)"></div>
<div class="a" style="left:1243px;top:16px;width:12px;height:7px;background:linear-gradient(90deg,#8e8e8e,#848484);border:1px solid #969696;border-right-color:#808080;border-bottom-color:#808080"></div>
<div class="a" style="left:1243px;top:1px;width:12px;height:14px;background:linear-gradient(#8c8c8c,#808080);border:1px solid #949494"></div>
<div class="a" style="left:1245px;top:4.5px;width:0;height:0;border-left:4px solid transparent;border-right:4px solid transparent;border-bottom:7.500px solid #303030"></div>
<div class="a" style="left:1243px;top:124px;width:12px;height:14px;background:linear-gradient(#8c8c8c,#808080);border:1px solid #949494"></div>
<div class="a" style="left:1245px;top:127.5px;width:0;height:0;border-left:4px solid transparent;border-right:4px solid transparent;border-top:7.500px solid #303030"></div>
</div>
<div class="a" style="left:10px;top:997px;color:#f0f0f0">jpatera</div>
<div class="a" style="left:1085px;top:997px;color:#f0f0f0">3.0 a822e58</div>
<div class="a" style="left:1169px;top:997px;color:#f0f0f0">1/5 (0)</div>
<div class="a" style="left:1220px;top:997px;color:#f0f0f0">85/154M</div>
<div class="a" style="left:0;top:1022px;width:1276px;height:4px;background:#2a2d33;border-top:1px solid #17191c"></div>
<svg class="a" style="left:1200px;top:1023px" width="70" height="3" viewBox="0 0 70 3" fill="none" stroke="#62656d" stroke-width="1.200"><path d="M7 0Q14.500 5 22 0M41 0Q50 5 59 0"/></svg>
<div class="a" style="left:355px;top:163px;width:569px;height:699px;background:#2a2e32;border:1px solid #17191b;border-radius:5px 5px 0 0;box-shadow:4px 3px 7px rgba(0,0,0,.5)"></div>
<div class="a" style="left:360px;top:192px;width:559px;height:665px;background:#2d2d2d"></div>
<div class="a" style="left:356px;top:164px;width:567px;height:28px;background:linear-gradient(#33373b,#2a2e32);border-radius:4px 4px 0 0"></div>
<svg class="a" style="left:360px;top:167px" width="22" height="22" viewBox="0 0 22 22"><rect width="22" height="22" rx="3.5" fill="#fcfcfc"/><path d="M12.800 2.600C10.500 3.200 8 5.500 7.900 8.500 7.800 11.500 9 13 11 14.200c1.600 1 2.600 2.100 2.400 4-.1.700.4 1 .9.600 1.900-1.600 2.700-4 1.700-6.200-1-2.200-3.400-3.400-3.800-5.800-.2-1.600 0-3 .6-4.200z" fill="#ec1c24"/><path d="M6.400 11.400c-1 2-.6 4.200 1 5.500 1.400 1.100 3.400 1.400 5.200 1.700.2-1-.4-1.800-1.600-2.400-2-1-3.800-2.400-4.600-4.800z" fill="#ec1c24"/></svg>
<div class="a b" style="left:356px;width:545px;top:171px;text-align:center;font-size:13px;letter-spacing:-.15px;color:#fcfcfc">Port</div>
<svg class="a" style="left:877px;top:172px" width="40" height="14" viewBox="0 0 40 14" fill="none" stroke="#fcfcfc" stroke-width="2"><path d="M4.500 9.500l4-4 4 4"/><path d="M27.500 2.500l8 8M35.500 2.500l-8 8"/></svg>
<div class="a lbl b" style="left:375px;top:208px">Rodič</div>
<div class="a lbl b" style="left:375px;top:240px">Název</div>
<div class="a lbl b" style="left:375px;top:272px">Typ</div>
<div class="a lbl " style="left:375px;top:326px">Hodnota</div>
<div class="a lbl b" style="left:375px;top:426px">Addresa</div>
<div class="a lbl " style="left:375px;top:458px">Regulace</div>
<div class="a fldd" style="left:436px;top:202px;width:308px">Test R4-B HAN</div>
<div class="a btn" style="left:749px;top:202px;width:159px">Změ<u>n</u>it</div>
<div class="a fld" style="left:436px;top:234px;width:308px">čítač 80.2</div>
<div class="a fld" style="left:436px;top:266px;width:281px">energie</div>
<div class="a cbtn" style="left:716px;top:266px"></div><div class="a tri" style="left:725px;top:276px"></div>
<div class="a chk" style="left:749px;top:271px"></div>
<div class="a lbl " style="left:769px;top:272px">s<u>k</u>okový</div>
<div class="a chk" style="left:749px;top:298px"></div>
<div class="a lbl " style="left:769px;top:299px">uži<u>v</u>atelský</div>
<div class="a chkd" style="left:436px;top:298px"></div>
<div class="a lbl lbld" style="left:456px;top:299px">nabídnout všechny typy</div>
<div class="a fld" style="left:436px;top:327px;width:155px">5762130</div>
<div class="a lbl " style="left:601px;top:333px">požadovaná</div>
<div class="a fld" style="left:679px;top:327px;width:65px"></div>
<div class="a btn btn2" style="left:749px;top:320px;width:159px">Ode<u>s</u>lat</div>
<div class="a chkd" style="left:436px;top:364px"></div>
<div class="a lbl lbld" style="left:456px;top:365px"><u>i</u>nvertuj výstup</div>
<div class="a lbl " style="left:652px;top:365px">init</div>
<div class="a fld" style="left:679px;top:359px;width:65px"></div>
<div class="a chkd" style="left:436px;top:398px"></div>
<div class="a lbl lbld" style="left:456px;top:399px"><u>u</u>držuj požadovanou hodnotu</div>
<div class="a fld" style="left:436px;top:420px;width:308px">80.2</div>
<div class="a fld" style="left:436px;top:452px;width:230px"></div>
<svg class="a" style="left:752px;top:456px" width="20" height="18" viewBox="0 0 20 18" fill="none" stroke="#14b4ec"><circle cx="7.800" cy="7.500" r="4.900" stroke-width="2.200"/><path d="M12 11.800l5 4.200" stroke-width="2.800"/></svg>
<div class="a fldd" style="left:436px;top:484px;width:281px"></div>
<div class="a cbtn" style="left:716px;top:484px;background:#777;border-left:1px solid #858585"></div><div class="a tri" style="left:725px;top:494px;border-top-color:#cfcfcf"></div>
<div class="a panel" style="left:370px;top:555px;width:539px;height:242px"></div>
<div class="a panel" style="left:370px;top:526px;width:58px;height:30px;border:1px solid #5e5e5e;border-bottom:none"></div>
<div class="a" style="left:428px;top:526px;width:58px;height:29px;background:linear-gradient(#474747,#2f2f2f);border:1px solid #4a4a4a;border-bottom:none;line-height:31px;text-align:center;color:#ececec"><u>H</u>odnota</div>
<div class="a" style="left:485px;top:526px;width:55px;height:29px;background:linear-gradient(#474747,#2f2f2f);border:1px solid #4a4a4a;border-bottom:none;line-height:31px;text-align:center;color:#ececec"><u>A</u>tributy</div>
<div class="a" style="left:539px;top:526px;width:47px;height:29px;background:#2e2e2e;border:1px solid #4a4a4a;border-bottom:none;line-height:31px;text-align:center;color:#585858"><u>E</u>xport</div>
<div class="a" style="left:370px;width:58px;top:532px;text-align:center;color:#fff"><u>J</u>ednotka</div>
<div class="a lbl " style="left:474.5px;top:604px">Jednotka</div>
<div class="a lbl " style="left:474.5px;top:636px">Jednotka výkonu</div>
<div class="a lbl " style="left:474.5px;top:668px">Korekce *</div>
<div class="a lbl " style="left:474.5px;top:732px">Korekce +</div>
<div class="a fld" style="left:694px;top:662px;width:70px"></div>
<div class="a fldd" style="left:694px;top:694px;width:69px"></div>
<div class="a lbl " style="left:773.5px;top:668px">kWh</div>
<div class="a lbl " style="left:773.5px;top:700px">pulsů</div>
<div class="a lbl " style="left:705px;top:732px">kWh</div>
<div class="a" style="left:575px;top:598px;width:93px;height:26px;background:linear-gradient(#e4e4e4,#fafafa);border:1px solid #fff"></div>
<div class="a cbtn" style="left:667px;top:598px;width:27px"></div><div class="a tri" style="left:676.500px;top:608px"></div>
<div class="a" style="left:575px;top:625px;width:120px;height:153px;background:#fff;border:1px solid #000"></div>
<div class="a" style="left:577px;top:628px;color:#111">GJ</div>
<div class="a" style="left:577px;top:647px;color:#111">GWh</div>
<div class="a" style="left:577px;top:666px;color:#111">J</div>
<div class="a" style="left:577px;top:685px;color:#111">kJ</div>
<div class="a" style="left:577px;top:704px;color:#111">kWh</div>
<div class="a" style="left:577px;top:723px;color:#111">MJ</div>
<div class="a" style="left:577px;top:742px;color:#111">MWh</div>
<div class="a" style="left:576px;top:759px;width:118px;height:19px;background:#000"></div>
<div class="a" style="left:577px;top:761px;color:#fff">Wh</div>
<div class="a" style="left:555.500px;top:741px;width:161px;height:44.500px;border:5.500px solid #ff0000"></div>
<div class="a btn" style="left:769px;top:819px;width:73px;height:27px;background:#4f4f4f;box-shadow:inset 0 0 0 1px #585858"></div>
<div class="a btn" style="left:847px;top:819px;width:62px;height:27px;background:#4f4f4f;box-shadow:inset 0 0 0 1px #585858"></div>
<svg class="a" style="left:774px;top:824px" width="16" height="16" viewBox="0 0 16 16"><defs><radialGradient id="gg" cx=".4" cy=".3" r=".8"><stop offset="0" stop-color="#8be060"/><stop offset="1" stop-color="#2a9a18"/></radialGradient></defs><circle cx="8" cy="8" r="7.600" fill="url(#gg)"/><path d="M3.800 8.500l3 3 5.500-6" stroke="#fff" stroke-width="2.200" fill="none"/></svg>
<svg class="a" style="left:852px;top:824px" width="16" height="16" viewBox="0 0 16 16"><defs><linearGradient id="rg" x2="0" y2="1"><stop offset="0" stop-color="#f46a6a"/><stop offset="1" stop-color="#d81818"/></linearGradient></defs><rect x=".3" y=".3" width="15.400" height="15.400" rx="2" fill="url(#rg)"/><path d="M3.200 3.200l9.600 9.600M12.800 3.200l-9.600 9.600" stroke="#fff" stroke-width="2.200"/></svg>
<div class="a lbl " style="left:794px;top:825px">Potvrdit</div>
<div class="a lbl " style="left:872px;top:825px">Zrušit</div>
</body></html>
